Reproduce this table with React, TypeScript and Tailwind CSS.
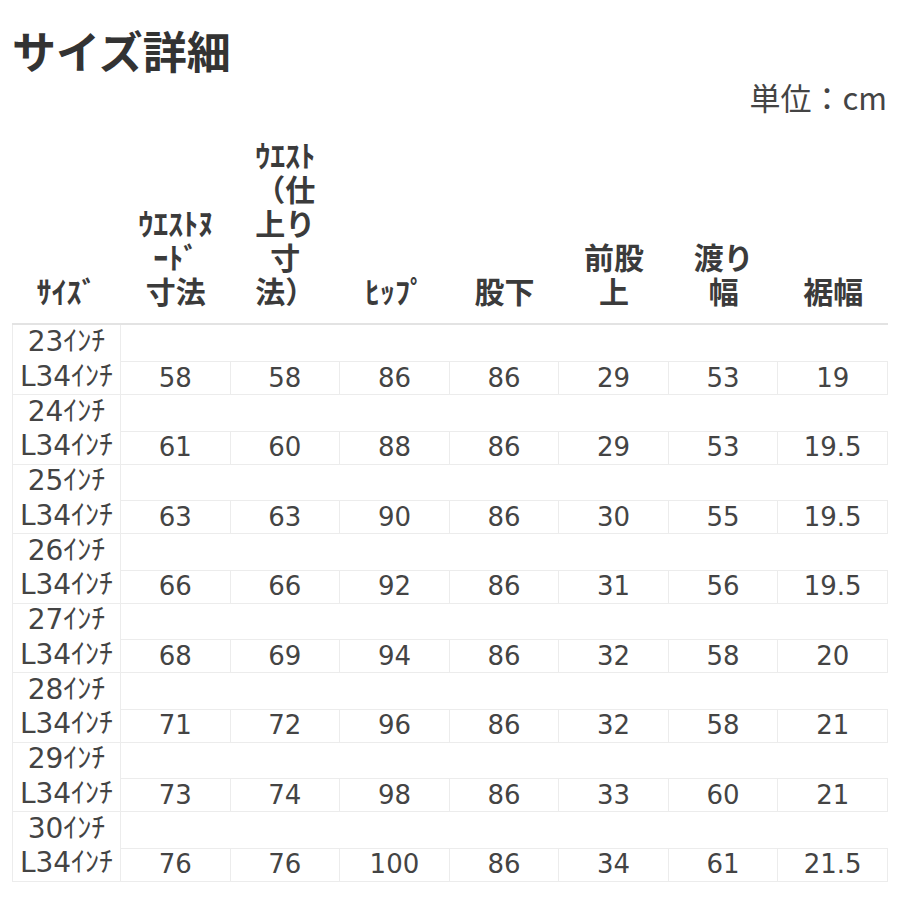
import React from "react";

const headers: string[][] = [
  ["ｻｲｽﾞ"],
  ["ｳｴｽﾄﾇ", "ｰﾄﾞ", "寸法"],
  ["ｳｴｽﾄ", "（仕", "上り", "寸", "法）"],
  ["ﾋｯﾌﾟ"],
  ["股下"],
  ["前股", "上"],
  ["渡り", "幅"],
  ["裾幅"],
];

const rows: { size: string; values: string[] }[] = [
  { size: "23", values: ["58", "58", "86", "86", "29", "53", "19"] },
  { size: "24", values: ["61", "60", "88", "86", "29", "53", "19.5"] },
  { size: "25", values: ["63", "63", "90", "86", "30", "55", "19.5"] },
  { size: "26", values: ["66", "66", "92", "86", "31", "56", "19.5"] },
  { size: "27", values: ["68", "69", "94", "86", "32", "58", "20"] },
  { size: "28", values: ["71", "72", "96", "86", "32", "58", "21"] },
  { size: "29", values: ["73", "74", "98", "86", "33", "60", "21"] },
  { size: "30", values: ["76", "76", "100", "86", "34", "61", "21.5"] },
];

const jp = { fontFamily: '"Noto Sans CJK JP", sans-serif' };
const num = { fontFamily: '"DejaVu Sans", "Noto Sans CJK JP", sans-serif' };

export default function App() {
  return (
    <div className="w-[900px] h-[900px] bg-white overflow-hidden px-3" style={jp}>
      <h1 className="pt-[28px] text-[44px] leading-[44px] font-bold text-[#333]">サイズ詳細</h1>

      <div className="mt-[7px] text-right text-[31px] leading-[36px] text-[#444] pr-[1px]">
        単位：cm
      </div>

      <div className="w-[876px]">
        {/* header */}
        <div className="grid grid-cols-[109px_repeat(7,1fr)] items-end border-b-2 border-[#e3e3e3] pt-[22px] pb-[16px]">
          {headers.map((lines, i) => (
            <div key={i} className="text-center text-[30px] leading-[34px] font-bold text-[#3b3b3b]">
              {lines.map((l, j) => (
                <div key={j}>{l}</div>
              ))}
            </div>
          ))}
        </div>

        {/* body */}
        {rows.map((r) => (
          <div key={r.size} className="grid grid-cols-[109px_repeat(7,1fr)] h-[69.5px]">
            <div
              className="border-l border-r border-b border-[#ececec] text-center text-[28px] leading-[34.5px] text-[#444]"
              style={num}
            >
              <div>{r.size}ｲﾝﾁ</div>
              <div>L34ｲﾝﾁ</div>
            </div>
            {r.values.map((v, i) => (
              <div key={i} className="flex flex-col justify-end">
                <div
                  className="h-[34px] border-t border-r border-b border-[#ececec] flex items-center justify-center text-[26px] text-[#444]"
                  style={num}
                >
                  {v}
                </div>
              </div>
            ))}
          </div>
        ))}
      </div>
    </div>
  );
}
